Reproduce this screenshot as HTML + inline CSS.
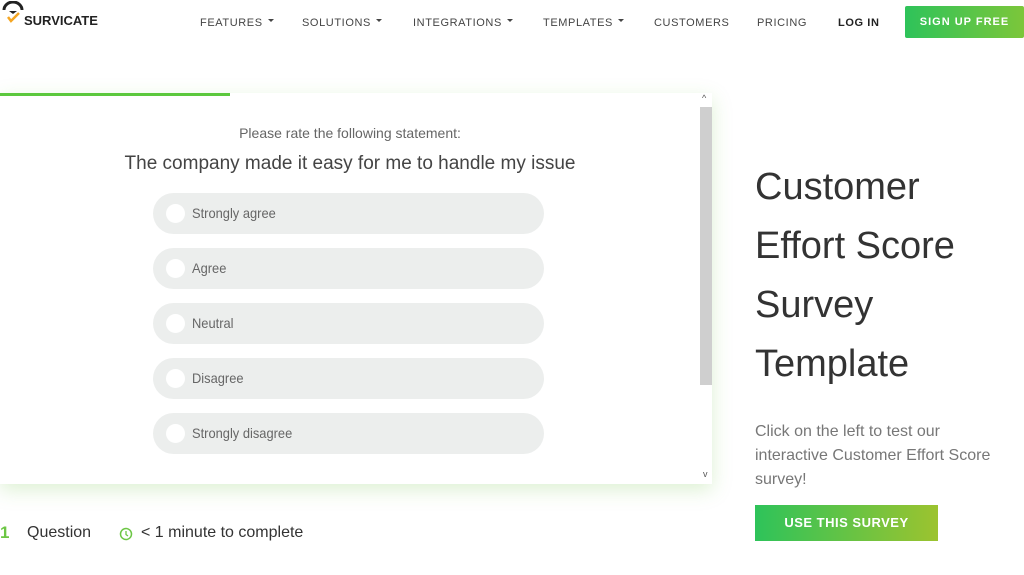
<!DOCTYPE html>
<html><head><meta charset="utf-8"><style>
body{margin:0;width:1024px;height:575px;background:#fff;font-family:"Liberation Sans",sans-serif;position:relative;overflow:hidden;color:#333}
.a{position:absolute;white-space:nowrap}
.nav{font-size:11px;letter-spacing:.6px;color:#444;top:17px}
.nav i{display:inline-block;border:3px solid transparent;border-top:3px solid #444;margin-left:5px;vertical-align:1px}
.card{position:absolute;left:0;top:93px;width:712px;height:391px;background:#fff;box-shadow:0 6px 18px rgba(120,200,80,.25)}
.pill{position:absolute;left:153px;width:391px;height:41px;border-radius:21px;background:#eceeed;font-size:14px;color:#666;line-height:41px}
.pill b{position:absolute;left:13px;top:11px;width:19px;height:19px;border-radius:50%;background:#fff}
.pill span{position:absolute;left:39px;transform:scaleX(.92);transform-origin:left}
.t{font-size:38px;color:#333;left:755px;letter-spacing:0}
</style></head><body>
<svg class="a" style="left:1px;top:1px" width="24" height="24" viewBox="0 0 24 24"><path d="M3 9a9 8 0 0 1 18 0" fill="none" stroke="#222" stroke-width="3"/><path d="M8 10l4 3 4-3z" fill="#222"/><path d="M7 16l3 4 8-8" fill="none" stroke="#f5a623" stroke-width="2.5"/></svg>
<div class="a" style="left:24px;top:13px;font-weight:bold;font-size:13px;color:#222">SURVICATE</div>
<div class="a nav" style="left:200px">FEATURES<i></i></div>
<div class="a nav" style="left:302px">SOLUTIONS<i></i></div>
<div class="a nav" style="left:413px">INTEGRATIONS<i></i></div>
<div class="a nav" style="left:543px">TEMPLATES<i></i></div>
<div class="a nav" style="left:654px">CUSTOMERS</div>
<div class="a nav" style="left:757px">PRICING</div>
<div class="a nav" style="left:838px;font-weight:bold;color:#222">LOG IN</div>
<div class="a" style="left:905px;top:6px;width:119px;height:32px;background:linear-gradient(90deg,#2ec35a,#7cc63a);color:#fff;font-size:11px;letter-spacing:1px;line-height:32px;text-align:center;font-weight:bold;border-radius:2px">SIGN UP FREE</div>
<div class="card">
<div class="a" style="left:0;top:0;width:230px;height:3px;background:#5cc83e"></div>
<div class="a" style="left:700px;top:14px;width:12px;height:278px;background:#cfcfcf"></div>
<div class="a" style="left:702px;top:0;font-size:9px;color:#555">^</div>
<div class="a" style="left:703px;top:376px;font-size:9px;color:#555">v</div>
<div class="a" style="left:0;width:700px;text-align:center;top:32px;font-size:14px;color:#666">Please rate the following statement:</div>
<div class="a" style="left:0;width:700px;text-align:center;top:60px;font-size:19px;color:#444">The company made it easy for me to handle my issue</div>
<div class="pill" style="top:100px"><b></b><span>Strongly agree</span></div>
<div class="pill" style="top:155px"><b></b><span>Agree</span></div>
<div class="pill" style="top:210px"><b></b><span>Neutral</span></div>
<div class="pill" style="top:265px"><b></b><span>Disagree</span></div>
<div class="pill" style="top:320px"><b></b><span>Strongly disagree</span></div>
</div>
<div class="a t" style="top:166px">Customer</div>
<div class="a t" style="top:225px">Effort Score</div>
<div class="a t" style="top:284px">Survey</div>
<div class="a t" style="top:343px">Template</div>
<div class="a" style="left:755px;top:420px;font-size:16px;line-height:24px;color:#777;white-space:normal;width:260px">Click on the left to test our interactive Customer Effort Score survey!</div>
<div class="a" style="left:755px;top:505px;width:183px;height:36px;background:linear-gradient(90deg,#2ec35a,#9cc32f);color:#fff;font-weight:bold;font-size:13px;letter-spacing:.5px;line-height:36px;text-align:center">USE THIS SURVEY</div>
<div class="a" style="left:0;top:523px;font-size:17px;color:#6cc644;font-weight:bold">1</div>
<div class="a" style="left:27px;top:524px;font-size:16px;color:#333">Question</div>
<svg class="a" style="left:119px;top:527px" width="14" height="14" viewBox="0 0 14 14"><circle cx="7" cy="7" r="5.5" fill="none" stroke="#6cc644" stroke-width="1.5"/><path d="M7 4v3.5l2 1.5" fill="none" stroke="#6cc644" stroke-width="1.3"/></svg>
<div class="a" style="left:141px;top:524px;font-size:16px;color:#333">&lt; 1 minute to complete</div>
</body></html>
